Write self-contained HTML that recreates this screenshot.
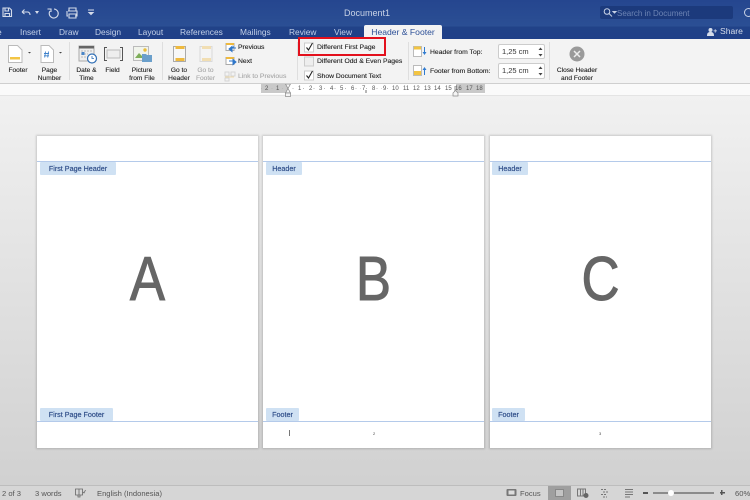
<!DOCTYPE html>
<html><head><meta charset="utf-8"><style>
html,body{margin:0;padding:0}
#r{position:relative;width:750px;height:500px;overflow:hidden;font-family:"Liberation Sans",sans-serif;background:linear-gradient(#f1f1f1 95px,#d1d1d1 480px);filter:blur(.35px)}
.a{position:absolute}
.t{position:absolute;white-space:nowrap;line-height:1}
.tab{position:absolute;top:27px;font-size:8.4px;color:#c3d0e8;white-space:nowrap;line-height:11px}
.l{position:absolute;font-size:6.6px;line-height:7.6px;color:#222;text-align:center;white-space:nowrap;transform:translateX(-50%);-webkit-text-stroke:.12px currentColor}
.s{position:absolute;font-size:6.8px;color:#222;white-space:nowrap;line-height:8px;-webkit-text-stroke:.12px currentColor}
.pg{position:absolute;top:136px;height:312px;background:#fff;box-shadow:0 0 2px 1px rgba(0,0,0,.16)}
.ln{position:absolute;left:0;right:0;height:1px;background:#b4caea}
.tg{position:absolute;height:13px;background:#cfe1f3;color:#2b4a86;font-size:7.2px;line-height:13px;text-align:center;white-space:nowrap;border-radius:1px;-webkit-text-stroke:.15px currentColor}
.let{position:absolute;left:0;right:0;top:113.500px;text-align:center;font-size:62px;line-height:60px;color:#666;transform:scaleX(.85);-webkit-text-stroke:1px #666}
.sep{position:absolute;top:42px;width:1px;height:38px;background:#dedede}
.st{position:absolute;top:489px;font-size:7.6px;color:#555;line-height:9px;white-space:nowrap}
.rn{position:absolute;top:85.500px;font-size:6px;line-height:7px;color:#555;padding:0 1px;margin-left:-1px}
</style></head><body><div id="r">
<div class="a" style="left:0;top:0;width:750px;height:39px;background:linear-gradient(#25468f,#2b4f94 26px,#214288 27px,#1f3f88)"></div>
<div class="a" style="left:0;top:39px;width:750px;height:44px;background:#f3f3f3;border-bottom:1px solid #cfcfcf"></div>
<div class="a" style="left:0;top:84px;width:750px;height:11px;background:#fafafa;border-bottom:1px solid #e4e4e4"></div>

<svg class="a" style="left:0;top:0" width="110" height="24" fill="none" stroke="#d5dcea" stroke-width="1.1">
<path d="M3 8h6.500l2 2v6.500H3zM5 8v3h3.500V8M5 16.500v-3h4.500v3"/>
<path d="M22 12l2.500-2.500M22 12l2.500 2M22 12h6a3 3 0 0 1 2 3"/><path d="M36 11.500l2 0-1 1.500z" fill="#d5dcea"/>
<path d="M54 9a4.500 4.500 0 1 1-4 2M47.500 9h3.500v3"/>
<path d="M68 11h9v5h-2M68 16h-1v-5M69 11V8h7v3M69 14h7v4h-7z"/>
<path d="M88 10h6M89 12.500l2 2 2-2z" fill="#d5dcea"/>
</svg>
<div class="t" style="left:344px;top:9px;font-size:9px;color:#c9d3e6;">Document1</div>

<div class="a" style="left:600px;top:6px;width:133px;height:13px;background:#1c3a7c;border-radius:2px"></div>
<svg class="a" style="left:602px;top:7px" width="16" height="12" fill="none" stroke="#c8d2e6" stroke-width="1"><circle cx="5" cy="4.500" r="2.800"/><path d="M7 6.500l3 3"/><path d="M11 4.500h3l-1.500 1.500z" fill="#c8d2e6"/></svg>
<div class="t" style="left:617px;top:9.500px;font-size:8px;color:#6d84b4">Search in Document</div>
<svg class="a" style="left:742px;top:6px" width="8" height="14" fill="none" stroke="#c8d2e6"><circle cx="6.500" cy="6.500" r="4"/></svg>

<div class="tab" style="left:-3px">e</div>
<div class="tab" style="left:20px">Insert</div>
<div class="tab" style="left:59px">Draw</div>
<div class="tab" style="left:95px">Design</div>
<div class="tab" style="left:138px">Layout</div>
<div class="tab" style="left:180px">References</div>
<div class="tab" style="left:240px">Mailings</div>
<div class="tab" style="left:289px">Review</div>
<div class="tab" style="left:334px">View</div>
<div class="a" style="left:364px;top:25px;width:78px;height:15px;background:#f3f3f3;border-radius:2px 2px 0 0;text-align:center;font-size:8.600px;line-height:15px;color:#2d5097;font-weight:400">Header &amp; Footer</div>
<svg class="a" style="left:707px;top:26.500px" width="11" height="10" fill="#d5dcea"><circle cx="3.500" cy="3" r="2"/><path d="M0 9c0-3 1-4 3.500-4S7 6 7 9z"/><path d="M6.500 3.500h3.500v.8H6.500zM7.800 2.200h.8v3.400h-.8z"/></svg>
<div class="t" style="left:720px;top:27px;font-size:8.600px;color:#d5dcea">Share</div>

<!-- ribbon icons -->
<svg class="a" style="left:0;top:40px" width="300" height="44" fill="none">
<path d="M8.500 5.500h9l4.500 4.500v12.500H8.500z" fill="#fff" stroke="#bbb"/><path d="M10 17h10v2.500H10z" fill="#f3c545"/><path d="M28 12h3l-1.500 1.500z" fill="#444"/>
<path d="M41 5.500h8l4.500 4.500v12.500H41z" fill="#fff" stroke="#bbb"/><path d="M44 13.500h5M44 15.800h5M45.500 11.500l-.8 6M48.500 11.500l-.8 6" stroke="#3f82cb" stroke-width=".9"/><path d="M59 12h3l-1.500 1.500z" fill="#444"/>
<rect x="79" y="6" width="15" height="15" fill="#eee" stroke="#aaa"/><path d="M79 6h15v2.500H79z" fill="#666"/><path d="M81 11h11M81 14h7M81 17h7" stroke="#bbb" stroke-dasharray="2 1"/><rect x="81.500" y="12" width="3" height="3" fill="#4a86c8"/>
<circle cx="92" cy="18.500" r="4.500" fill="#fff" stroke="#2f6eb5" stroke-width="1.200"/><path d="M92 16v2.500h2" stroke="#2f6eb5" stroke-width=".8"/>
<path d="M107 7.500h-2.500v13H107M120 7.500h2.500v13H120" stroke="#555"/><rect x="107" y="10" width="13" height="8" fill="#eee" stroke="#bbb"/>
<path d="M133.500 6.500h15v14h-15z" fill="#f1f4ec" stroke="#bbb"/><path d="M135 18l4-5 3 3 2-1.500 3 3.500z" fill="#7eae59"/><circle cx="145" cy="10" r="1.700" fill="#e8bd3d"/>
<path d="M142 14h4l1 1h5v7h-10z" fill="#6a9fcb"/>
<path d="M173.500 6.500h12v15h-12z" fill="#f7f7f7" stroke="#aaa"/><path d="M175.500 6h9v3h-9zM175.500 18h9v3h-9z" fill="#eeb93e"/>
<g opacity=".35"><path d="M200 6.500h12v15h-12z" fill="#f7f7f7" stroke="#aaa"/><path d="M202 6h9v3h-9zM202 18h9v3h-9z" fill="#eeb93e"/></g>
<path d="M226 3.500h8v7h-8z" fill="#fff" stroke="#aaa"/><path d="M226 3h8v2h-8z" fill="#eeb93e"/><path d="M236 8h-4M232 8l2-1.500M229 9l3-2.500v5z" stroke="#2f76c9" fill="#2f76c9"/>
<path d="M226 17.500h8v7h-8z" fill="#fff" stroke="#aaa"/><path d="M226 17h8v2h-8z" fill="#eeb93e"/><path d="M229 21h4M236 22l-3-2.500v5z" stroke="#2f76c9" fill="#2f76c9"/>
<g opacity=".4"><path d="M225 32h4v4h-4zM231 32h4v4h-4zM225 38h4v3h-4z" stroke="#aaa"/><path d="M225 37h9" stroke="#eeb93e"/></g>
</svg>

<div class="l" style="left:18px;top:67px">Footer</div>
<div class="l" style="left:49.500px;top:67px">Page<br>Number</div>
<div class="l" style="left:86.500px;top:67px">Date &amp;<br>Time</div>
<div class="l" style="left:112.500px;top:67px">Field</div>
<div class="l" style="left:142px;top:67px">Picture<br>from File</div>
<div class="l" style="left:179px;top:67px">Go to<br>Header</div>
<div class="l" style="left:205.500px;top:67px;color:#a8a8a8">Go to<br>Footer</div>
<div class="s" style="left:238px;top:43.500px">Previous</div>
<div class="s" style="left:238px;top:57.500px">Next</div>
<div class="s" style="left:238px;top:72.500px;color:#a8a8a8">Link to Previous</div>
<div class="sep" style="left:69px"></div><div class="sep" style="left:162px"></div><div class="sep" style="left:297px"></div><div class="sep" style="left:408px"></div><div class="sep" style="left:549px"></div>

<svg class="a" style="left:304px;top:42px" width="12" height="42" fill="none">
<rect x=".5" y="1" width="9" height="9" fill="#fff" stroke="#ccc"/><path d="M2.500 5.500l2 2.500 4-7" stroke="#222" stroke-width="1.100"/>
<rect x=".5" y="15" width="9" height="9" fill="#eee" stroke="#ccc"/>
<rect x=".5" y="29" width="9" height="9" fill="#fff" stroke="#ccc"/><path d="M2.500 33.500l2 2.500 4-7" stroke="#222" stroke-width="1.100"/>
</svg>
<div class="s" style="left:317px;top:43.500px">Different First Page</div>
<div class="s" style="left:317px;top:58px">Different Odd &amp; Even Pages</div>
<div class="s" style="left:317px;top:72.500px">Show Document Text</div>
<div class="a" style="left:298px;top:37px;width:84px;height:15px;border:2px solid #e3101c"></div>

<svg class="a" style="left:413px;top:44px" width="16" height="34" fill="none">
<path d="M.5 2.500h8v10h-8z" fill="#fff" stroke="#bbb"/><path d="M1 2.500h7v3H1z" fill="#f2c443"/><path d="M11.500 3v7" stroke="#2f7bd0"/><path d="M9.500 8h4l-2 3z" fill="#2f7bd0"/>
<path d="M.5 21.500h8v10h-8z" fill="#fff" stroke="#bbb"/><path d="M1 27h7v4H1z" fill="#f2c443"/><path d="M11.500 24v7" stroke="#2f7bd0"/><path d="M9.500 26h4l-2-3z" fill="#2f7bd0"/>
</svg>
<div class="s" style="left:430px;top:48.500px">Header from Top:</div>
<div class="s" style="left:430px;top:67.500px">Footer from Bottom:</div>
<div class="a" style="left:498px;top:44px;width:47px;height:15px;background:#fff;border:1px solid #ccc;border-radius:2px;box-sizing:border-box;font-size:7.500px;line-height:13px;color:#333;padding-left:3px">1,25 cm</div>
<div class="a" style="left:498px;top:63px;width:47px;height:16px;background:#fff;border:1px solid #ccc;border-radius:2px;box-sizing:border-box;font-size:7.500px;line-height:14px;color:#333;padding-left:3px">1,25 cm</div>
<svg class="a" style="left:537px;top:45px" width="7" height="34" fill="#444"><path d="M1.500 5l2-2.500 2 2.500zM1.500 9l2 2.500 2-2.500zM1.500 24l2-2.500 2 2.500zM1.500 28l2 2.500 2-2.500z"/></svg>

<svg class="a" style="left:569px;top:45.500px" width="17" height="17" fill="none"><circle cx="8" cy="8" r="7.500" fill="#9a9a9a"/><path d="M5 5l6 6M11 5l-6 6" stroke="#eee" stroke-width="1.500"/></svg>
<div class="l" style="left:577px;top:67px;color:#222">Close Header<br>and Footer</div>

<!-- ruler -->
<div class="a" style="left:261px;top:84px;width:224px;height:10px;background:#fff"></div>
<div class="a" style="left:261px;top:84px;width:27px;height:9px;background:#c9c9c9"></div>
<div class="a" style="left:456px;top:84px;width:29px;height:9px;background:#c9c9c9"></div>
<div class="a" style="left:261px;top:88px;width:224px;height:1px;background:repeating-linear-gradient(90deg,#bbb 0 1px,transparent 1px 5.250px)"></div>
<span class="rn" style="left:265px;background:#c9c9c9">2</span><span class="rn" style="left:276px;background:#c9c9c9">1</span>
<span class="rn" style="left:298px;background:#fff">1</span><span class="rn" style="left:309px;background:#fff">2</span><span class="rn" style="left:319px;background:#fff">3</span><span class="rn" style="left:330px;background:#fff">4</span><span class="rn" style="left:340px;background:#fff">5</span><span class="rn" style="left:351px;background:#fff">6</span><span class="rn" style="left:362px;background:#fff">7</span><span class="rn" style="left:372px;background:#fff">8</span><span class="rn" style="left:383px;background:#fff">9</span><span class="rn" style="left:392px;background:#fff">10</span><span class="rn" style="left:403px;background:#fff">11</span><span class="rn" style="left:413px;background:#fff">12</span><span class="rn" style="left:424px;background:#fff">13</span><span class="rn" style="left:434px;background:#fff">14</span><span class="rn" style="left:445px;background:#fff">15</span><span class="rn" style="left:455px;background:#c9c9c9">16</span><span class="rn" style="left:466px;background:#c9c9c9">17</span><span class="rn" style="left:476px;background:#c9c9c9">18</span>
<svg class="a" style="left:284px;top:84px" width="190" height="14" fill="#f4f4f4" stroke="#888" stroke-width=".7"><path d="M1.500 0l5 0-2.500 4.500zM4 4.500l-2.500 4.500h5z"/><rect x="1.500" y="9" width="5" height="3.500"/><path d="M82 6v3" stroke="#333"/><path d="M174 9l-2.500-2.500-2.500 2.500v3h5z"/></svg>

<!-- pages -->
<div class="pg" style="left:37px;width:221px">
 <div class="ln" style="top:25px"></div><div class="tg" style="left:3px;top:26px;width:76px">First Page Header</div>
 <div class="let">A</div>
 <div class="tg" style="left:3px;top:272px;width:73px">First Page Footer</div><div class="ln" style="top:285px"></div>
</div>
<div class="pg" style="left:263px;width:221px">
 <div class="ln" style="top:25px"></div><div class="tg" style="left:3px;top:26px;width:36px">Header</div>
 <div class="let">B</div>
 <div class="tg" style="left:3px;top:272px;width:33px">Footer</div><div class="ln" style="top:285px"></div>
 <div class="a" style="left:26px;top:294px;width:1px;height:6px;background:#777"></div>
 <div class="a" style="left:110px;top:295px;font-size:4px;line-height:5px;color:#444">2</div>
</div>
<div class="pg" style="left:490px;width:221px">
 <div class="ln" style="top:25px"></div><div class="tg" style="left:2px;top:26px;width:36px">Header</div>
 <div class="let">C</div>
 <div class="tg" style="left:2px;top:272px;width:33px">Footer</div><div class="ln" style="top:285px"></div>
 <div class="a" style="left:109px;top:295px;font-size:4px;line-height:5px;color:#444">3</div>
</div>

<!-- status bar -->
<div class="a" style="left:0;top:485px;width:750px;height:15px;background:#d6d6d6;border-top:1px solid #bdbdbd;box-sizing:border-box"></div>
<div class="st" style="left:2px">2 of 3</div>
<div class="st" style="left:35px">3 words</div>
<svg class="a" style="left:75px;top:488px" width="11" height="10" fill="none" stroke="#666" stroke-width=".8"><path d="M.5 1h7v6h-7zM4 1v6M3 7v2h2V7M8 4l1 1 1.500-3"/></svg>
<div class="st" style="left:97px">English (Indonesia)</div>
<svg class="a" style="left:506px;top:488px" width="11" height="10"><rect x=".5" y="1" width="10" height="7" rx="1" fill="#777"/><rect x="2.500" y="2.500" width="6" height="4" fill="#ddd"/></svg>
<div class="st" style="left:520px">Focus</div>
<div class="a" style="left:548px;top:486px;width:23px;height:14px;background:#9f9f9f"></div>
<div class="a" style="left:555px;top:489px;width:9px;height:8px;background:#c4c4c4;border:1px solid #888;box-sizing:border-box"></div>
<svg class="a" style="left:577px;top:487px" width="75" height="12" fill="none" stroke="#777"><path d="M.5 2h8v7h-8zM3.500 2v7M6 2v7"/><circle cx="9" cy="8.500" r="2.500" fill="#666" stroke="none"/><path d="M24 2.500h6M26 5h6M24 7.500h6M26 10h4" stroke-dasharray="2 1"/><path d="M48 2.500h8M48 5h8M48 7.500h8M48 10h5"/></svg>
<div class="a" style="left:643px;top:492px;width:5px;height:1.500px;background:#555"></div>
<div class="a" style="left:653px;top:492px;width:61px;height:2px;background:#8b8b8b"></div>
<div class="a" style="left:668px;top:490px;width:6px;height:6px;border-radius:50%;background:#fff"></div>
<div class="a" style="left:719.500px;top:490px;width:5px;height:5px;background:linear-gradient(#555,#555) center/5px 1.500px no-repeat,linear-gradient(#555,#555) center/1.500px 5px no-repeat"></div>
<div class="st" style="left:735px">60%</div>
</div></body></html>
